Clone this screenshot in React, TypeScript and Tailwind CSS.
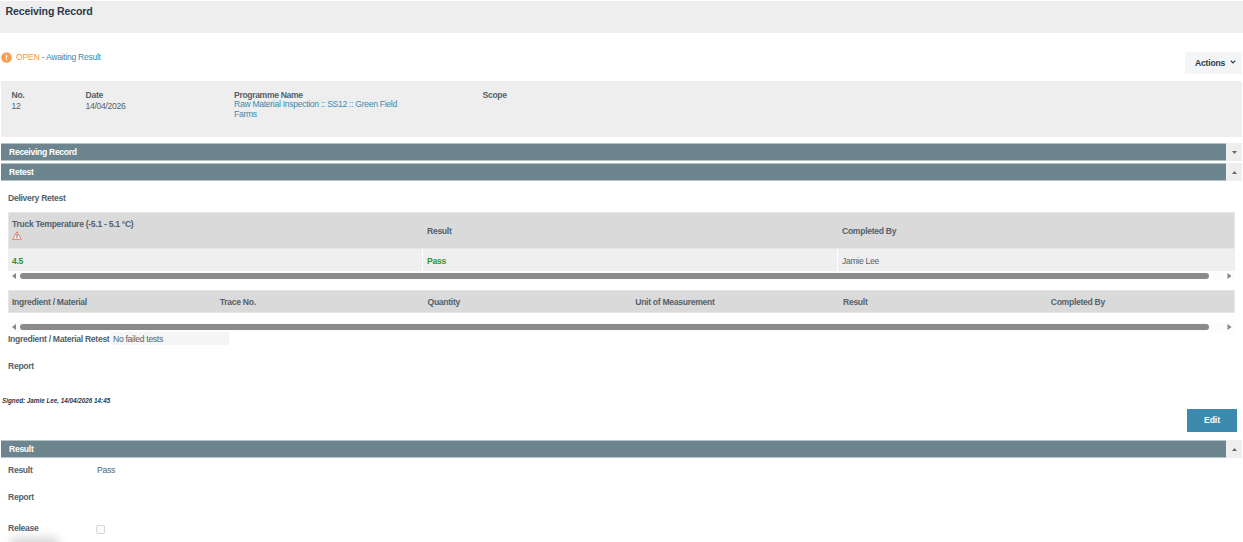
import React from 'react';

const SectionBar = ({ title, open }: { title: string; open?: boolean }) => (
  <div className="flex h-[18px] ml-[1px] mr-[1px]">
    <div className="flex-1 bg-[#6c858e] border border-[#b5c2c6] border-x-0 pl-[8px] text-white font-bold leading-[16px]">{title}</div>
    <button className="w-4 bg-[#eeeeee] flex items-center justify-center">
      <svg className="w-[5px] h-[3px]" viewBox="0 0 5 3" fill="#5d6b73">
        <path d={open ? 'M2.5 0L5 3H0z' : 'M0 0h5L2.5 3z'} />
      </svg>
    </button>
  </div>
);

const ScrollBar = () => (
  <div className="h-[10px] bg-[#fcfcfc] flex items-center pl-[4px] pr-[3px]">
    <svg className="w-[4px] h-[6px]" viewBox="0 0 4 6" fill="#858585"><path d="M4 0v6L0 3z" /></svg>
    <div className="ml-[4px] mr-[18px] h-[6px] flex-1 rounded-full bg-[#8a8a8a]"></div>
    <svg className="w-[5px] h-[6px]" viewBox="0 0 5 6" fill="#858585"><path d="M.5 0v6l4-3z" /></svg>
  </div>
);

const WarningIcon = () => (
  <svg className="w-[10px] h-[9px] block" viewBox="0 0 10 9">
    <path d="M5 .8L9.3 8.3H.7z" fill="#fff" stroke="#e5786f" strokeWidth="1" strokeLinejoin="round" />
    <path d="M5 3.2v2.5M5 6.3v1" stroke="#4b4b55" strokeWidth="1" />
  </svg>
);

const materialColumns = ['Ingredient / Material', 'Trace No.', 'Quantity', 'Unit of Measurement', 'Result', 'Completed By'];

const App: React.FC = () => {
  return (
    <div className="relative w-full h-[542px] overflow-hidden bg-white font-['Liberation_Sans',Arial,sans-serif] text-[8.6px] tracking-[-0.3px] leading-[10px] text-[#54626b]">
      <header className="mt-[1px] h-[32px] bg-[#eeeeee] pl-[5.5px] pt-[4px]">
        <h1 className="text-[10.6px] tracking-[-0.15px] leading-[13px] font-bold text-[#2b3a4b]">Receiving Record</h1>
      </header>

      <div className="flex justify-between h-[48px] pl-[1px] pr-[1px]">
        <div className="flex items-center h-[12px] mt-[18px]">
          <svg className="w-[11px] h-[11px] mr-[4px]" viewBox="0 0 11 11">
            <circle cx="5.5" cy="5.5" r="5.3" fill="#f9a04f" />
            <path d="M5.5 2.8v3.4M5.5 7.1v1.2" stroke="#fff" strokeWidth="1.2" />
          </svg>
          <span className="text-[#f79646] tracking-[-0.15px]">OPEN</span>
          <span className="text-[#3c8bae] whitespace-pre"> - Awaiting Result</span>
        </div>
        <button className="mt-[19px] w-[57px] h-[22px] bg-[#f3f5f7] flex items-center pl-[10px] pb-[1px] tracking-[-0.2px] font-bold text-[#2b3a4b]">
          Actions
          <svg className="w-[6px] h-[4px] ml-[5px] -mt-[2px]" viewBox="0 0 6 4" fill="none" stroke="#2b3a4b" strokeWidth="1.2"><path d="M.7 .7L3 3 5.3 .7" /></svg>
        </button>
      </div>

      {/* Record summary */}
      <section className="mx-[1px] h-[56px] bg-[#eeeeee] flex pl-[10.5px] pt-[9px]">
        <div className="w-[74px]">
          <div className="font-bold">No.</div>
          <div className="mt-[1px]">12</div>
        </div>
        <div className="w-[148.5px]">
          <div className="font-bold">Date</div>
          <div className="mt-[1px]">14/04/2026</div>
        </div>
        <div className="w-[248.5px]">
          <div className="font-bold tracking-[-0.35px]">Programme Name</div>
          <a className="block w-[170px] leading-[9.5px] text-[#3c8bae]">Raw Material Inspection :: SS12 :: Green Field Farms</a>
        </div>
        <div className="font-bold">Scope</div>
      </section>

      <div className="mt-[6px]"><SectionBar title="Receiving Record" /></div>
      <div className="mt-[2px]"><SectionBar title="Retest" open /></div>

      <section className="px-[8px] h-[214px]">
        <h2 className="pt-[12px] font-bold">Delivery Retest</h2>

        <div className="mt-[9px]">
          <div className="grid grid-cols-[415px_415px_1fr] h-[37px] bg-[#dadada] border border-[#e6e6e6] font-bold items-center">
            <div className="pl-[3px] -mt-[2px]">
              <div>Truck Temperature (-5.1 - 5.1 °C)</div>
              <div className="mt-[2px] h-[10px]"><WarningIcon /></div>
            </div>
            <div className="pl-[3px]">Result</div>
            <div className="pl-[3px]">Completed By</div>
          </div>
          <div className="grid grid-cols-[415px_415px_1fr] h-[22px] bg-[#efefef] leading-[24px]">
            <div className="pl-[4px] border-r border-white font-bold text-[#2f9330]">4.5</div>
            <div className="pl-[4px] border-r border-white font-bold text-[#2f9330]">Pass</div>
            <div className="pl-[4px]">Jamie Lee</div>
          </div>
          <ScrollBar />
        </div>

        <div className="mt-[9px]">
          <div className="grid grid-cols-[repeat(5,207.75px)_1fr] h-[23px] bg-[#dadada] border border-[#e6e6e6] font-bold leading-[22px]">
            {materialColumns.map((c) => <div key={c} className="pl-[3px]">{c}</div>)}
          </div>
          <div className="h-[9px]"></div>
          <ScrollBar />
        </div>

        <div className="flex h-[13px] leading-[14px]">
          <div className="w-[103px] font-bold whitespace-nowrap">Ingredient / Material Retest</div>
          <div className="w-[118px] pl-[2px] bg-[#f5f5f5]">No failed tests</div>
        </div>
        <div className="mt-[16px] font-bold">Report</div>
      </section>

      <section>
        <div className="pl-[2px] h-[12px] text-[6.3px] tracking-normal leading-[12px] font-bold italic text-[#2b3a4b]">Signed: Jamie Lee, 14/04/2026 14:45</div>
        <div className="flex justify-end pr-[6px] mt-[2px]">
          <button className="w-[50px] h-[23px] bg-[#3c8bae] text-white tracking-[-0.1px] font-bold pb-[1px]">Edit</button>
        </div>
      </section>

      <div className="mt-[8px]"><SectionBar title="Result" open /></div>

      <section className="pl-[8px]">
        <div className="flex pt-[7px]">
          <div className="w-[89px] font-bold">Result</div>
          <div>Pass</div>
        </div>
        <div className="mt-[17px] font-bold">Report</div>
        <div className="flex mt-[21px]">
          <div className="w-[88px] font-bold">Release</div>
          <div className="mt-[2px] w-[9px] h-[9px] rounded-[2px] border border-[#d6d6d6] bg-[#fafafa]"></div>
        </div>
      </section>

      <div className="absolute left-[10px] bottom-[-9px] w-[50px] h-[14px] rounded-full bg-black/15 blur-[5px]"></div>
    </div>
  );
};

export default App;
